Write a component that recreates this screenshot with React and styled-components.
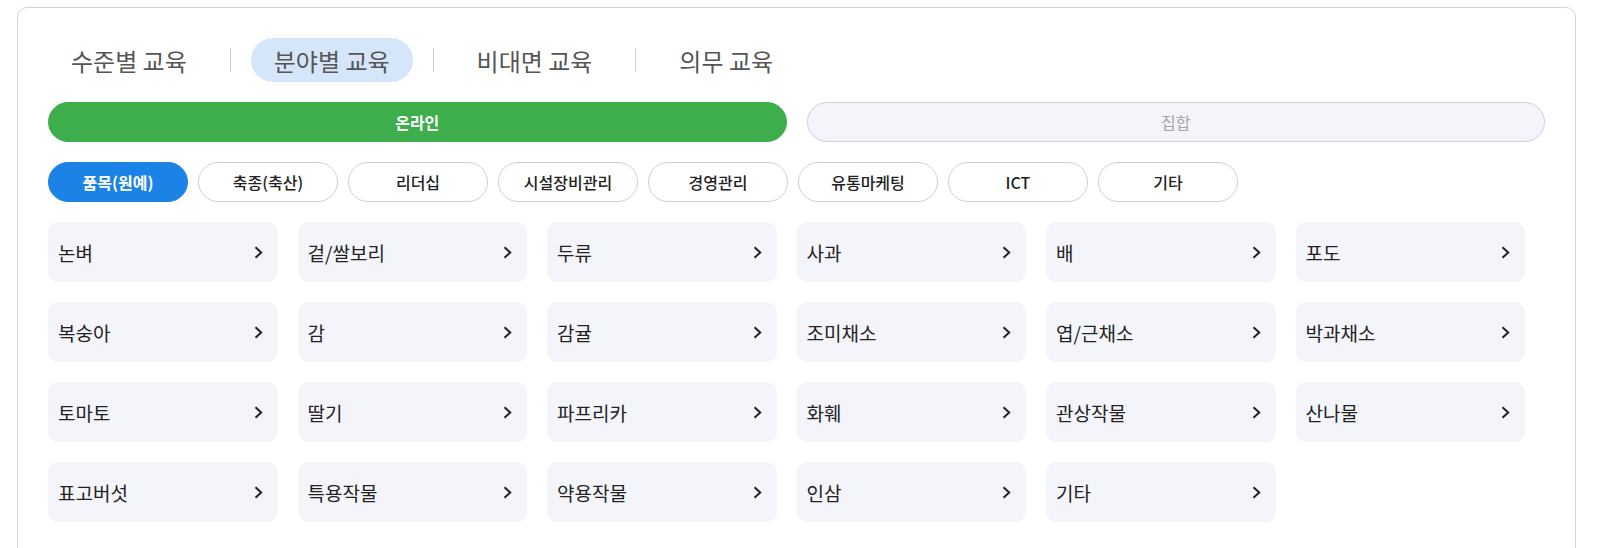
import React from "react";
import styled, { createGlobalStyle } from "styled-components";

const GlobalStyle = createGlobalStyle`
  body {
    margin: 0;
    background: #fff;
    font-family: "Noto Sans CJK KR", "Noto Sans", sans-serif;
  }
`;

const Card = styled.section`
  box-sizing: border-box;
  width: 1559px;
  margin: 7px 0 0 17px;
  padding: 30px 30px 40px;
  border: 1px solid #d2d3d8;
  border-radius: 10px;
  background: #fff;
  display: flex;
  flex-direction: column;
  gap: 20px;
`;

const TabBar = styled.nav`
  display: flex;
  align-items: center;
  gap: 20px;
  height: 44px;
`;

const Tab = styled.button`
  height: 44px;
  padding: 0 23px;
  border: none;
  border-radius: 22px;
  background: ${(p) => (p.$active ? "#d5e6fb" : "transparent")};
  color: #555;
  font-family: inherit;
  font-size: 24px;
  font-weight: 400;
  cursor: pointer;
`;

const Divider = styled.span`
  width: 1px;
  height: 24px;
  background: #cfcfcf;
`;

const ModeRow = styled.div`
  display: grid;
  grid-template-columns: 1fr 1fr;
  gap: 20px;
`;

const ModeButton = styled.button`
  height: 40px;
  border-radius: 20px;
  border: 1px solid ${(p) => (p.$active ? "#3dae4b" : "#cfd0d8")};
  background: ${(p) => (p.$active ? "#3dae4b" : "#f4f5fa")};
  color: ${(p) => (p.$active ? "#fff" : "#a5a5a5")};
  font-family: inherit;
  font-size: 16px;
  font-weight: ${(p) => (p.$active ? 700 : 400)};
  cursor: pointer;
`;

const ChipRow = styled.div`
  display: flex;
  gap: 10px;
`;

const Chip = styled.button`
  width: 140px;
  height: 40px;
  border-radius: 20px;
  border: 1px solid ${(p) => (p.$active ? "#1b82e6" : "#cfd0d8")};
  background: ${(p) => (p.$active ? "#1b82e6" : "#fff")};
  color: ${(p) => (p.$active ? "#fff" : "#222")};
  font-family: inherit;
  font-size: 16px;
  font-weight: ${(p) => (p.$active ? 700 : 500)};
  cursor: pointer;
`;

const Grid = styled.ul`
  list-style: none;
  margin: 0;
  padding: 0;
  display: grid;
  grid-template-columns: repeat(6, 1fr);
  row-gap: 20px;
`;

const Item = styled.li`
  height: 60px;
  margin-right: 20px;
  padding: 0 15px 0 10px;
  border-radius: 10px;
  background: #f4f5fa;
  display: flex;
  align-items: center;
  justify-content: space-between;
  color: #222;
  font-size: 19px;
  cursor: pointer;
`;

const Chevron = () => (
  <svg width="9" height="13" viewBox="0 0 9 13" fill="none">
    <path d="M1.5 1.2 L7.2 6.5 L1.5 11.8" stroke="#222" strokeWidth="2" />
  </svg>
);

const tabs = ["수준별 교육", "분야별 교육", "비대면 교육", "의무 교육"];
const chips = ["품목(원예)", "축종(축산)", "리더십", "시설장비관리", "경영관리", "유통마케팅", "ICT", "기타"];
const items = [
  "논벼", "겉/쌀보리", "두류", "사과", "배", "포도",
  "복숭아", "감", "감귤", "조미채소", "엽/근채소", "박과채소",
  "토마토", "딸기", "파프리카", "화훼", "관상작물", "산나물",
  "표고버섯", "특용작물", "약용작물", "인삼", "기타",
];

export default function App() {
  return (
    <>
      <GlobalStyle />
      <Card>
        <TabBar>
          {tabs.map((t, i) => (
            <React.Fragment key={t}>
              {i > 0 && <Divider />}
              <Tab $active={i === 1}>{t}</Tab>
            </React.Fragment>
          ))}
        </TabBar>
        <ModeRow>
          <ModeButton $active>온라인</ModeButton>
          <ModeButton>집합</ModeButton>
        </ModeRow>
        <ChipRow>
          {chips.map((c, i) => (
            <Chip key={c} $active={i === 0}>{c}</Chip>
          ))}
        </ChipRow>
        <Grid>
          {items.map((name, i) => (
            <Item key={i}>
              <span>{name}</span>
              <Chevron />
            </Item>
          ))}
        </Grid>
      </Card>
    </>
  );
}
